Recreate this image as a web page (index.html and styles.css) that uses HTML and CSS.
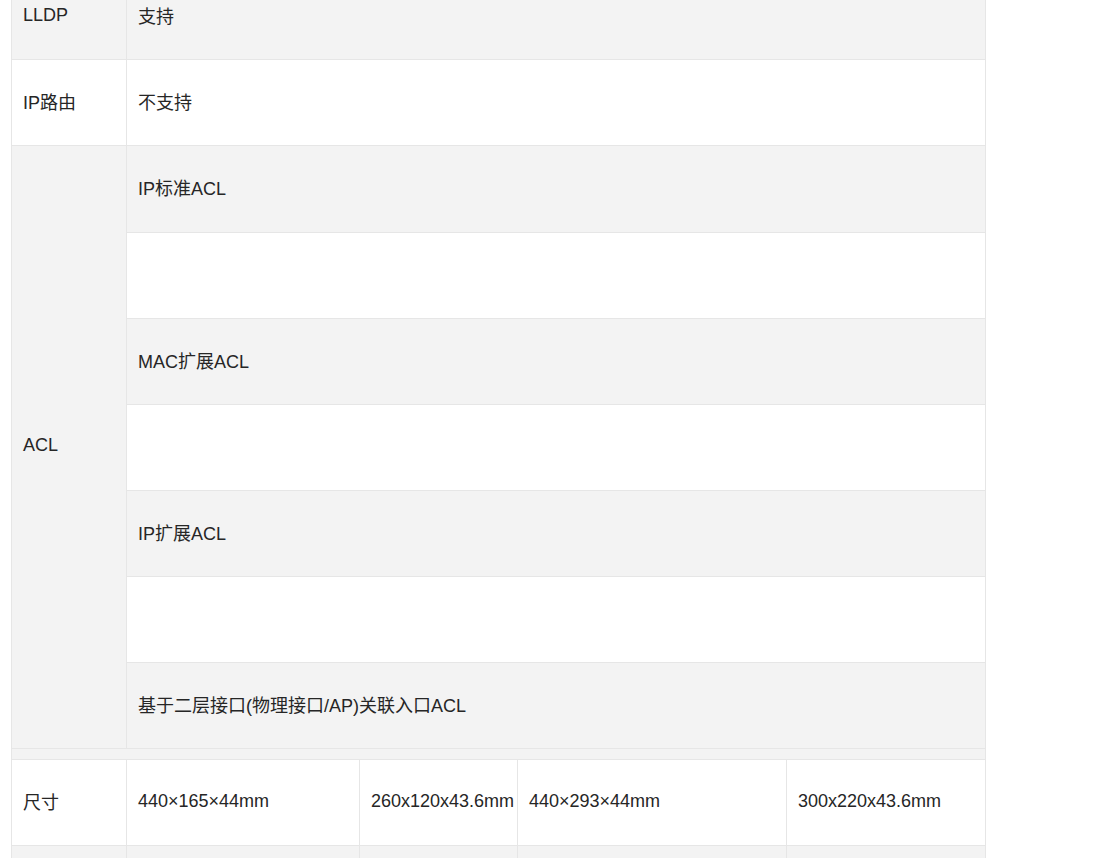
FILE: index.html
```html
<!DOCTYPE html>
<html lang="zh-CN">
<head>
  <meta charset="UTF-8" />
  <title>规格参数</title>
  <link rel="stylesheet" href="styles.css">
</head>
<body>
  <table class="spec">
    <colgroup>
      <col class="col-name">
      <col class="col-a">
      <col class="col-b">
      <col class="col-c">
      <col class="col-d">
    </colgroup>
    <tr class="alt">
      <td>LLDP</td>
      <td colspan="4">支持</td>
    </tr>
    <tr>
      <td>IP路由</td>
      <td colspan="4">不支持</td>
    </tr>
    <tr class="alt">
      <td>ACL</td>
      <td colspan="4" class="nest-cell">
        <table class="nested">
          <tr class="alt"><td>IP标准ACL</td></tr>
          <tr><td></td></tr>
          <tr class="alt"><td>MAC扩展ACL</td></tr>
          <tr><td></td></tr>
          <tr class="alt"><td>IP扩展ACL</td></tr>
          <tr><td></td></tr>
          <tr class="alt"><td>基于二层接口(物理接口/AP)关联入口ACL</td></tr>
        </table>
      </td>
    </tr>
    <tr class="alt gap">
      <td colspan="5"></td>
    </tr>
    <tr>
      <td>尺寸</td>
      <td>440×165×44mm</td>
      <td>260x120x43.6mm</td>
      <td>440×293×44mm</td>
      <td>300x220x43.6mm</td>
    </tr>
    <tr class="alt">
      <td></td>
      <td></td>
      <td></td>
      <td></td>
      <td></td>
    </tr>
  </table>
</body>
</html>
```

FILE: styles.css
```css
body {
  margin: 0;
  background: #fff;
}

.spec {
  margin: -27px 0 0 11px;
  width: 974px;
  border-collapse: collapse;
  table-layout: fixed;
  font-family: "Liberation Sans", "Noto Sans CJK SC", sans-serif;
  font-size: 18px;
  color: #262626;
}

.col-name { width: 115px; }
.col-a { width: 233px; }
.col-b { width: 158px; }
.col-c { width: 269px; }
.col-d { width: 199px; }

.spec td {
  border: 1px solid #e6e6e6;
  height: 86px;
  padding: 0 11px 3px;
  white-space: nowrap;
  box-sizing: border-box;
}

.spec tr.alt > td {
  background: #f3f3f3;
}

.spec tr.gap > td {
  height: 11px;
  padding: 0;
}

.spec td.nest-cell {
  padding: 0;
}

.nested {
  width: 100%;
  border-collapse: collapse;
}

.nested td {
  border: none;
  border-bottom: 1px solid #e6e6e6;
  height: 86px;
  padding: 0 11px 3px;
  background: #fff;
}

.nested tr:last-child td {
  border-bottom: none;
}
```
